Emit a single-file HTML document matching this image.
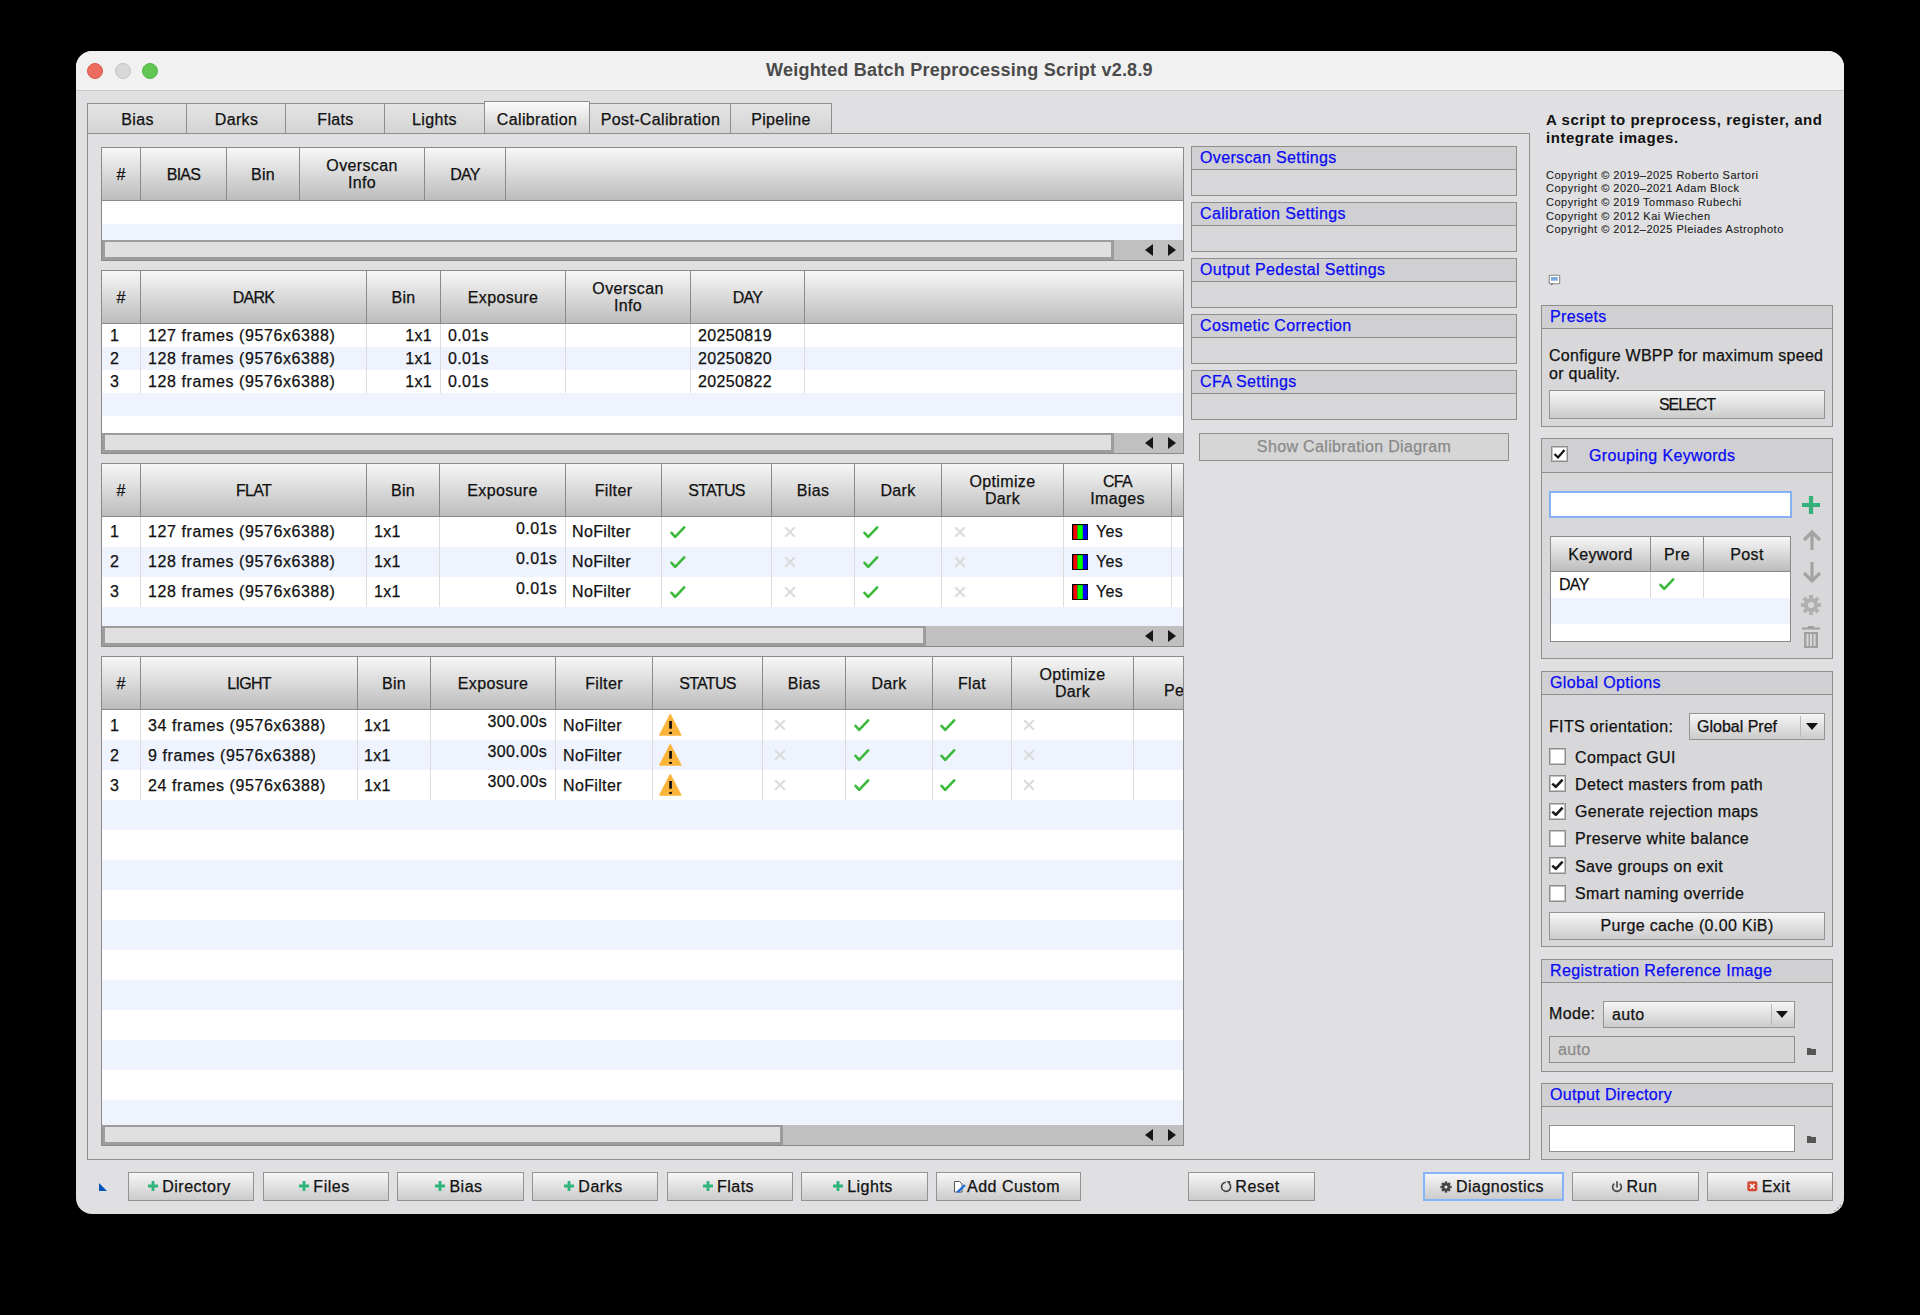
<!DOCTYPE html><html><head><meta charset="utf-8"><style>
*{box-sizing:border-box;margin:0;padding:0}
html,body{width:1920px;height:1315px;overflow:hidden;background:#000}
body{position:relative;font-family:"Liberation Sans",sans-serif;font-size:16px;color:#111;letter-spacing:0.35px;-webkit-text-stroke:0.25px currentColor}
.a{position:absolute}
.win{left:76px;top:51px;width:1768px;height:1163px;border-radius:16px;background:#e0e0e2;overflow:hidden}
.tbar{left:76px;top:51px;width:1768px;height:39px;background:#f1f1f1;border-radius:16px 16px 0 0}
.tline{left:76px;top:90px;width:1768px;height:1px;background:#c9c9cb}
.dot{width:16px;height:16px;border-radius:50%}
.title{font-weight:bold;font-size:18px;color:#4a4a4a;letter-spacing:0.24px;white-space:nowrap;-webkit-text-stroke:0}
.tab{border:1px solid #8e8e8e;background:linear-gradient(#e4e4e4,#d4d4d4);text-align:center;white-space:nowrap;line-height:28px;height:31px}
.tabsel{background:linear-gradient(#fbfbfb,#d0d0d0)}
.pane{border:1px solid #8e8e8e}
.tbl{border:1px solid #8a8a8a;background:#fff;overflow:hidden}
.hdr{left:0;top:0;height:52px;background:linear-gradient(#f7f7f7,#bcbcbc);border-bottom:1px solid #8a8a8a}
.hc{top:0;height:52px;display:flex;align-items:center;justify-content:center;text-align:center;line-height:17px;white-space:nowrap}
.hs{top:0;width:1px;height:52px;background:#8a8a8a}
.row{left:0;background:#fff}
.alt{background:#eef3fd}
.cs{width:1px;background:#dcdcdc}
.cell{white-space:nowrap;line-height:20px}
.sb{left:0;height:20px;background:#c0c0c0}
.sbh{left:0;top:0;height:20px;background:#e0e0e0;border:2px solid #9c9c9c;border-width:2px 3px 3px 3px}
.arrL{width:0;height:0;border-top:6.5px solid transparent;border-bottom:6.5px solid transparent;border-right:8px solid #161616}
.arrR{width:0;height:0;border-top:6.5px solid transparent;border-bottom:6.5px solid transparent;border-left:8px solid #161616}
.sec{border:1px solid #8e8e8e;background:#d8d8da}
.sech{left:0;top:0;right:0;height:23px;background:#d0d0d2;border-bottom:1px solid #8e8e8e;color:#0a0af5;padding-left:8px;line-height:22px;white-space:nowrap}
.btn{border:1px solid #939393;background:linear-gradient(#f6f6f6,#cbcbcb);text-align:center;white-space:nowrap;line-height:26px}
.btnd{border:1px solid #8f8f8f;background:#d6d6d6;color:#8a8a8a;text-align:center;white-space:nowrap;line-height:26px}
.lbl{white-space:nowrap;line-height:18px}
.cb{width:17px;height:17px;border:1px solid #8e8e8e;background:#fff;box-shadow:inset 0 0 0 1px #c4c4c4}
.tf{border:1px solid #8e8e8e;background:#fff}
.blue{color:#0a0af5}
.uc{letter-spacing:-0.7px}
</style></head><body>
<div class="a win"></div>
<div class="a tbar"></div><div class="a tline"></div>
<div class="a dot" style="left:87px;top:62.5px;background:#ed6b5f;border:0.5px solid #d9574b"></div>
<div class="a dot" style="left:114.5px;top:62.5px;background:#d8d8d8;border:1px solid #c4c4c4"></div>
<div class="a dot" style="left:141.5px;top:62.5px;background:#62c655;border:0.5px solid #52b345"></div>
<div class="a title" style="left:766px;top:59px;line-height:22px">Weighted Batch Preprocessing Script v2.8.9</div>
<div class="a pane" style="left:87px;top:133px;width:1443px;height:1027px"></div>
<div class="a tab" style="left:87px;top:103px;width:101px;height:31px;line-height:31px">Bias</div>
<div class="a tab" style="left:186px;top:103px;width:101px;height:31px;line-height:31px">Darks</div>
<div class="a tab" style="left:285px;top:103px;width:101px;height:31px;line-height:31px">Flats</div>
<div class="a tab" style="left:384px;top:103px;width:101px;height:31px;line-height:31px">Lights</div>
<div class="a tab tabsel" style="left:484px;top:101px;width:106px;height:33px;line-height:35px">Calibration</div>
<div class="a tab" style="left:589px;top:103px;width:143px;height:31px;line-height:31px">Post-Calibration</div>
<div class="a tab" style="left:730px;top:103px;width:102px;height:31px;line-height:31px">Pipeline</div>
<div class="a tbl" style="left:101px;top:147px;width:1083px;height:114px">
<div class="a row" style="top:53px;width:1081px;height:23px"></div>
<div class="a row alt" style="top:76px;width:1081px;height:16px"></div>
<div class="a cs" style="left:38px;top:53px;height:0px"></div>
<div class="a cs" style="left:124px;top:53px;height:0px"></div>
<div class="a cs" style="left:197px;top:53px;height:0px"></div>
<div class="a cs" style="left:322px;top:53px;height:0px"></div>
<div class="a cs" style="left:403px;top:53px;height:0px"></div>
<div class="a hdr" style="width:1081px;height:53px"></div>
<div class="a hc" style="left:0px;width:38px"><div>#</div></div>
<div class="a hc" style="left:39px;width:85px"><div><span class=uc>BIAS</span></div></div>
<div class="a hc" style="left:125px;width:72px"><div>Bin</div></div>
<div class="a hc" style="left:198px;width:124px"><div>Overscan<br>Info</div></div>
<div class="a hc" style="left:323px;width:80px"><div><span class=uc>DAY</span></div></div>
<div class="a hs" style="left:38px"></div>
<div class="a hs" style="left:124px"></div>
<div class="a hs" style="left:197px"></div>
<div class="a hs" style="left:322px"></div>
<div class="a hs" style="left:403px"></div>
<div class="a sb" style="top:92px;width:1081px"></div>
<div class="a sbh" style="top:92px;width:1012px"></div>
<div class="a arrL" style="left:1043px;top:96px"></div>
<div class="a arrR" style="left:1066px;top:96px"></div>
</div>
<div class="a tbl" style="left:101px;top:270px;width:1083px;height:184px">
<div class="a row" style="top:53px;width:1081px;height:23px"></div>
<div class="a row alt" style="top:76px;width:1081px;height:23px"></div>
<div class="a row" style="top:99px;width:1081px;height:23px"></div>
<div class="a row alt" style="top:122px;width:1081px;height:23px"></div>
<div class="a row" style="top:145px;width:1081px;height:17px"></div>
<div class="a cs" style="left:38px;top:53px;height:69px"></div>
<div class="a cs" style="left:264px;top:53px;height:69px"></div>
<div class="a cs" style="left:338px;top:53px;height:69px"></div>
<div class="a cs" style="left:463px;top:53px;height:69px"></div>
<div class="a cs" style="left:588px;top:53px;height:69px"></div>
<div class="a cs" style="left:702px;top:53px;height:69px"></div>
<div class="a hdr" style="width:1081px;height:53px"></div>
<div class="a hc" style="left:0px;width:38px"><div>#</div></div>
<div class="a hc" style="left:39px;width:225px"><div><span class=uc>DARK</span></div></div>
<div class="a hc" style="left:265px;width:73px"><div>Bin</div></div>
<div class="a hc" style="left:339px;width:124px"><div>Exposure</div></div>
<div class="a hc" style="left:464px;width:124px"><div>Overscan<br>Info</div></div>
<div class="a hc" style="left:589px;width:113px"><div><span class=uc>DAY</span></div></div>
<div class="a hs" style="left:38px"></div>
<div class="a hs" style="left:264px"></div>
<div class="a hs" style="left:338px"></div>
<div class="a hs" style="left:463px"></div>
<div class="a hs" style="left:588px"></div>
<div class="a hs" style="left:702px"></div>
<div class="a cell" style="left:8px;top:53px;height:23px;line-height:23px;">1</div>
<div class="a cell" style="left:46px;top:53px;height:23px;line-height:23px;letter-spacing:0.6px">127 frames (9576x6388)</div>
<div class="a cell" style="left:278px;top:53px;height:23px;line-height:23px;width:52px;text-align:right">1x1</div>
<div class="a cell" style="left:346px;top:53px;height:23px;line-height:23px;">0.01s</div>
<div class="a cell" style="left:596px;top:53px;height:23px;line-height:23px;">20250819</div>
<div class="a cell" style="left:8px;top:76px;height:23px;line-height:23px;">2</div>
<div class="a cell" style="left:46px;top:76px;height:23px;line-height:23px;letter-spacing:0.6px">128 frames (9576x6388)</div>
<div class="a cell" style="left:278px;top:76px;height:23px;line-height:23px;width:52px;text-align:right">1x1</div>
<div class="a cell" style="left:346px;top:76px;height:23px;line-height:23px;">0.01s</div>
<div class="a cell" style="left:596px;top:76px;height:23px;line-height:23px;">20250820</div>
<div class="a cell" style="left:8px;top:99px;height:23px;line-height:23px;">3</div>
<div class="a cell" style="left:46px;top:99px;height:23px;line-height:23px;letter-spacing:0.6px">128 frames (9576x6388)</div>
<div class="a cell" style="left:278px;top:99px;height:23px;line-height:23px;width:52px;text-align:right">1x1</div>
<div class="a cell" style="left:346px;top:99px;height:23px;line-height:23px;">0.01s</div>
<div class="a cell" style="left:596px;top:99px;height:23px;line-height:23px;">20250822</div>
<div class="a sb" style="top:162px;width:1081px"></div>
<div class="a sbh" style="top:162px;width:1012px"></div>
<div class="a arrL" style="left:1043px;top:166px"></div>
<div class="a arrR" style="left:1066px;top:166px"></div>
</div>
<div class="a tbl" style="left:101px;top:463px;width:1083px;height:184px">
<div class="a row" style="top:53px;width:1081px;height:30px"></div>
<div class="a row alt" style="top:83px;width:1081px;height:30px"></div>
<div class="a row" style="top:113px;width:1081px;height:30px"></div>
<div class="a row alt" style="top:143px;width:1081px;height:19px"></div>
<div class="a cs" style="left:38px;top:53px;height:90px"></div>
<div class="a cs" style="left:264px;top:53px;height:90px"></div>
<div class="a cs" style="left:337px;top:53px;height:90px"></div>
<div class="a cs" style="left:463px;top:53px;height:90px"></div>
<div class="a cs" style="left:559px;top:53px;height:90px"></div>
<div class="a cs" style="left:669px;top:53px;height:90px"></div>
<div class="a cs" style="left:752px;top:53px;height:90px"></div>
<div class="a cs" style="left:839px;top:53px;height:90px"></div>
<div class="a cs" style="left:961px;top:53px;height:90px"></div>
<div class="a cs" style="left:1069px;top:53px;height:90px"></div>
<div class="a hdr" style="width:1081px;height:53px"></div>
<div class="a hc" style="left:0px;width:38px"><div>#</div></div>
<div class="a hc" style="left:39px;width:225px"><div><span class=uc>FLAT</span></div></div>
<div class="a hc" style="left:265px;width:72px"><div>Bin</div></div>
<div class="a hc" style="left:338px;width:125px"><div>Exposure</div></div>
<div class="a hc" style="left:464px;width:95px"><div>Filter</div></div>
<div class="a hc" style="left:560px;width:109px"><div><span class=uc>STATUS</span></div></div>
<div class="a hc" style="left:670px;width:82px"><div>Bias</div></div>
<div class="a hc" style="left:753px;width:86px"><div>Dark</div></div>
<div class="a hc" style="left:840px;width:121px"><div>Optimize<br>Dark</div></div>
<div class="a hc" style="left:962px;width:107px"><div><span class=uc>CFA</span><br>Images</div></div>
<div class="a hc" style="left:1070px;width:12px"><div></div></div>
<div class="a hs" style="left:38px"></div>
<div class="a hs" style="left:264px"></div>
<div class="a hs" style="left:337px"></div>
<div class="a hs" style="left:463px"></div>
<div class="a hs" style="left:559px"></div>
<div class="a hs" style="left:669px"></div>
<div class="a hs" style="left:752px"></div>
<div class="a hs" style="left:839px"></div>
<div class="a hs" style="left:961px"></div>
<div class="a hs" style="left:1069px"></div>
<div class="a cell" style="left:8px;top:53px;height:30px;line-height:30px;">1</div>
<div class="a cell" style="left:46px;top:53px;height:30px;line-height:30px;letter-spacing:0.6px">127 frames (9576x6388)</div>
<div class="a cell" style="left:272px;top:53px;height:30px;line-height:30px;">1x1</div>
<div class="a cell" style="left:378px;top:53px;height:30px;line-height:30px;width:77px;text-align:right;margin-top:-3px">0.01s</div>
<div class="a cell" style="left:470px;top:53px;height:30px;line-height:30px;">NoFilter</div>
<div class="a" style="left:567px;top:61px;line-height:0"><svg width="18" height="14" viewBox="0 0 18 14"><path d="M2.5 7.8 L6.2 11.9 L15.2 2.4" fill="none" stroke="#3bb93b" stroke-width="2.6" stroke-linecap="round" stroke-linejoin="round"/></svg></div>
<div class="a" style="left:682px;top:61.5px;line-height:0"><svg width="12" height="12" viewBox="0 0 12 12"><path d="M1.2 1.2 L10.8 10.8 M10.8 1.2 L1.2 10.8" fill="none" stroke="#dcdcdc" stroke-width="2.2"/></svg></div>
<div class="a" style="left:760px;top:61px;line-height:0"><svg width="18" height="14" viewBox="0 0 18 14"><path d="M2.5 7.8 L6.2 11.9 L15.2 2.4" fill="none" stroke="#3bb93b" stroke-width="2.6" stroke-linecap="round" stroke-linejoin="round"/></svg></div>
<div class="a" style="left:851.5px;top:61.5px;line-height:0"><svg width="12" height="12" viewBox="0 0 12 12"><path d="M1.2 1.2 L10.8 10.8 M10.8 1.2 L1.2 10.8" fill="none" stroke="#dcdcdc" stroke-width="2.2"/></svg></div>
<div class="a" style="left:969.5px;top:59.6px;line-height:0"><svg width="16" height="16" viewBox="0 0 16 16"><rect x="0" y="0" width="16" height="16" fill="#000"/><rect x="1.3" y="1.1" width="4.1" height="14" fill="#ff0000"/><rect x="5.4" y="1.1" width="5.5" height="14" fill="#00ff00"/><rect x="10.9" y="1.1" width="4.5" height="14" fill="#0000ff"/></svg></div>
<div class="a cell" style="left:994px;top:53px;height:30px;line-height:30px;">Yes</div>
<div class="a cell" style="left:8px;top:83px;height:30px;line-height:30px;">2</div>
<div class="a cell" style="left:46px;top:83px;height:30px;line-height:30px;letter-spacing:0.6px">128 frames (9576x6388)</div>
<div class="a cell" style="left:272px;top:83px;height:30px;line-height:30px;">1x1</div>
<div class="a cell" style="left:378px;top:83px;height:30px;line-height:30px;width:77px;text-align:right;margin-top:-3px">0.01s</div>
<div class="a cell" style="left:470px;top:83px;height:30px;line-height:30px;">NoFilter</div>
<div class="a" style="left:567px;top:91px;line-height:0"><svg width="18" height="14" viewBox="0 0 18 14"><path d="M2.5 7.8 L6.2 11.9 L15.2 2.4" fill="none" stroke="#3bb93b" stroke-width="2.6" stroke-linecap="round" stroke-linejoin="round"/></svg></div>
<div class="a" style="left:682px;top:91.5px;line-height:0"><svg width="12" height="12" viewBox="0 0 12 12"><path d="M1.2 1.2 L10.8 10.8 M10.8 1.2 L1.2 10.8" fill="none" stroke="#dcdcdc" stroke-width="2.2"/></svg></div>
<div class="a" style="left:760px;top:91px;line-height:0"><svg width="18" height="14" viewBox="0 0 18 14"><path d="M2.5 7.8 L6.2 11.9 L15.2 2.4" fill="none" stroke="#3bb93b" stroke-width="2.6" stroke-linecap="round" stroke-linejoin="round"/></svg></div>
<div class="a" style="left:851.5px;top:91.5px;line-height:0"><svg width="12" height="12" viewBox="0 0 12 12"><path d="M1.2 1.2 L10.8 10.8 M10.8 1.2 L1.2 10.8" fill="none" stroke="#dcdcdc" stroke-width="2.2"/></svg></div>
<div class="a" style="left:969.5px;top:89.6px;line-height:0"><svg width="16" height="16" viewBox="0 0 16 16"><rect x="0" y="0" width="16" height="16" fill="#000"/><rect x="1.3" y="1.1" width="4.1" height="14" fill="#ff0000"/><rect x="5.4" y="1.1" width="5.5" height="14" fill="#00ff00"/><rect x="10.9" y="1.1" width="4.5" height="14" fill="#0000ff"/></svg></div>
<div class="a cell" style="left:994px;top:83px;height:30px;line-height:30px;">Yes</div>
<div class="a cell" style="left:8px;top:113px;height:30px;line-height:30px;">3</div>
<div class="a cell" style="left:46px;top:113px;height:30px;line-height:30px;letter-spacing:0.6px">128 frames (9576x6388)</div>
<div class="a cell" style="left:272px;top:113px;height:30px;line-height:30px;">1x1</div>
<div class="a cell" style="left:378px;top:113px;height:30px;line-height:30px;width:77px;text-align:right;margin-top:-3px">0.01s</div>
<div class="a cell" style="left:470px;top:113px;height:30px;line-height:30px;">NoFilter</div>
<div class="a" style="left:567px;top:121px;line-height:0"><svg width="18" height="14" viewBox="0 0 18 14"><path d="M2.5 7.8 L6.2 11.9 L15.2 2.4" fill="none" stroke="#3bb93b" stroke-width="2.6" stroke-linecap="round" stroke-linejoin="round"/></svg></div>
<div class="a" style="left:682px;top:121.5px;line-height:0"><svg width="12" height="12" viewBox="0 0 12 12"><path d="M1.2 1.2 L10.8 10.8 M10.8 1.2 L1.2 10.8" fill="none" stroke="#dcdcdc" stroke-width="2.2"/></svg></div>
<div class="a" style="left:760px;top:121px;line-height:0"><svg width="18" height="14" viewBox="0 0 18 14"><path d="M2.5 7.8 L6.2 11.9 L15.2 2.4" fill="none" stroke="#3bb93b" stroke-width="2.6" stroke-linecap="round" stroke-linejoin="round"/></svg></div>
<div class="a" style="left:851.5px;top:121.5px;line-height:0"><svg width="12" height="12" viewBox="0 0 12 12"><path d="M1.2 1.2 L10.8 10.8 M10.8 1.2 L1.2 10.8" fill="none" stroke="#dcdcdc" stroke-width="2.2"/></svg></div>
<div class="a" style="left:969.5px;top:119.6px;line-height:0"><svg width="16" height="16" viewBox="0 0 16 16"><rect x="0" y="0" width="16" height="16" fill="#000"/><rect x="1.3" y="1.1" width="4.1" height="14" fill="#ff0000"/><rect x="5.4" y="1.1" width="5.5" height="14" fill="#00ff00"/><rect x="10.9" y="1.1" width="4.5" height="14" fill="#0000ff"/></svg></div>
<div class="a cell" style="left:994px;top:113px;height:30px;line-height:30px;">Yes</div>
<div class="a sb" style="top:162px;width:1081px"></div>
<div class="a sbh" style="top:162px;width:824px"></div>
<div class="a arrL" style="left:1043px;top:166px"></div>
<div class="a arrR" style="left:1066px;top:166px"></div>
</div>
<div class="a tbl" style="left:101px;top:656px;width:1083px;height:490px">
<div class="a row" style="top:53px;width:1081px;height:30px"></div>
<div class="a row alt" style="top:83px;width:1081px;height:30px"></div>
<div class="a row" style="top:113px;width:1081px;height:30px"></div>
<div class="a row alt" style="top:143px;width:1081px;height:30px"></div>
<div class="a row" style="top:173px;width:1081px;height:30px"></div>
<div class="a row alt" style="top:203px;width:1081px;height:30px"></div>
<div class="a row" style="top:233px;width:1081px;height:30px"></div>
<div class="a row alt" style="top:263px;width:1081px;height:30px"></div>
<div class="a row" style="top:293px;width:1081px;height:30px"></div>
<div class="a row alt" style="top:323px;width:1081px;height:30px"></div>
<div class="a row" style="top:353px;width:1081px;height:30px"></div>
<div class="a row alt" style="top:383px;width:1081px;height:30px"></div>
<div class="a row" style="top:413px;width:1081px;height:30px"></div>
<div class="a row alt" style="top:443px;width:1081px;height:25px"></div>
<div class="a cs" style="left:38px;top:53px;height:90px"></div>
<div class="a cs" style="left:255px;top:53px;height:90px"></div>
<div class="a cs" style="left:328px;top:53px;height:90px"></div>
<div class="a cs" style="left:453px;top:53px;height:90px"></div>
<div class="a cs" style="left:550px;top:53px;height:90px"></div>
<div class="a cs" style="left:660px;top:53px;height:90px"></div>
<div class="a cs" style="left:743px;top:53px;height:90px"></div>
<div class="a cs" style="left:830px;top:53px;height:90px"></div>
<div class="a cs" style="left:909px;top:53px;height:90px"></div>
<div class="a cs" style="left:1031px;top:53px;height:90px"></div>
<div class="a hdr" style="width:1081px;height:53px"></div>
<div class="a hc" style="left:0px;width:38px"><div>#</div></div>
<div class="a hc" style="left:39px;width:216px"><div><span class=uc>LIGHT</span></div></div>
<div class="a hc" style="left:256px;width:72px"><div>Bin</div></div>
<div class="a hc" style="left:329px;width:124px"><div>Exposure</div></div>
<div class="a hc" style="left:454px;width:96px"><div>Filter</div></div>
<div class="a hc" style="left:551px;width:109px"><div><span class=uc>STATUS</span></div></div>
<div class="a hc" style="left:661px;width:82px"><div>Bias</div></div>
<div class="a hc" style="left:744px;width:86px"><div>Dark</div></div>
<div class="a hc" style="left:831px;width:78px"><div>Flat</div></div>
<div class="a hc" style="left:910px;width:121px"><div>Optimize<br>Dark</div></div>
<div class="a hc" style="left:1032px;width:50px"><div><span style='position:absolute;left:30px;top:25px'>Pedestal</span></div></div>
<div class="a hs" style="left:38px"></div>
<div class="a hs" style="left:255px"></div>
<div class="a hs" style="left:328px"></div>
<div class="a hs" style="left:453px"></div>
<div class="a hs" style="left:550px"></div>
<div class="a hs" style="left:660px"></div>
<div class="a hs" style="left:743px"></div>
<div class="a hs" style="left:830px"></div>
<div class="a hs" style="left:909px"></div>
<div class="a hs" style="left:1031px"></div>
<div class="a cell" style="left:8px;top:54px;height:30px;line-height:30px;">1</div>
<div class="a cell" style="left:46px;top:54px;height:30px;line-height:30px;letter-spacing:0.6px">34 frames (9576x6388)</div>
<div class="a cell" style="left:262px;top:54px;height:30px;line-height:30px;">1x1</div>
<div class="a cell" style="left:358px;top:54px;height:30px;line-height:30px;width:87px;text-align:right;margin-top:-4px">300.00s</div>
<div class="a cell" style="left:461px;top:54px;height:30px;line-height:30px;">NoFilter</div>
<div class="a" style="left:556px;top:56px;line-height:0"><svg width="24" height="24" viewBox="0 0 24 24"><path d="M12.3 1.6 L22.9 22.1 L1.7 22.1 Z" fill="#fbb43a" stroke="#fbb43a" stroke-width="1.2" stroke-linejoin="round"/><rect x="11.2" y="8" width="2.7" height="7.7" fill="#111"/><rect x="11.2" y="18.9" width="2.7" height="2" fill="#111"/></svg></div>
<div class="a" style="left:672.3px;top:61.5px;line-height:0"><svg width="12" height="12" viewBox="0 0 12 12"><path d="M1.2 1.2 L10.8 10.8 M10.8 1.2 L1.2 10.8" fill="none" stroke="#dcdcdc" stroke-width="2.2"/></svg></div>
<div class="a" style="left:750.5px;top:61px;line-height:0"><svg width="18" height="14" viewBox="0 0 18 14"><path d="M2.5 7.8 L6.2 11.9 L15.2 2.4" fill="none" stroke="#3bb93b" stroke-width="2.6" stroke-linecap="round" stroke-linejoin="round"/></svg></div>
<div class="a" style="left:837px;top:61px;line-height:0"><svg width="18" height="14" viewBox="0 0 18 14"><path d="M2.5 7.8 L6.2 11.9 L15.2 2.4" fill="none" stroke="#3bb93b" stroke-width="2.6" stroke-linecap="round" stroke-linejoin="round"/></svg></div>
<div class="a" style="left:921.2px;top:61.5px;line-height:0"><svg width="12" height="12" viewBox="0 0 12 12"><path d="M1.2 1.2 L10.8 10.8 M10.8 1.2 L1.2 10.8" fill="none" stroke="#dcdcdc" stroke-width="2.2"/></svg></div>
<div class="a cell" style="left:8px;top:84px;height:30px;line-height:30px;">2</div>
<div class="a cell" style="left:46px;top:84px;height:30px;line-height:30px;letter-spacing:0.6px">9 frames (9576x6388)</div>
<div class="a cell" style="left:262px;top:84px;height:30px;line-height:30px;">1x1</div>
<div class="a cell" style="left:358px;top:84px;height:30px;line-height:30px;width:87px;text-align:right;margin-top:-4px">300.00s</div>
<div class="a cell" style="left:461px;top:84px;height:30px;line-height:30px;">NoFilter</div>
<div class="a" style="left:556px;top:86px;line-height:0"><svg width="24" height="24" viewBox="0 0 24 24"><path d="M12.3 1.6 L22.9 22.1 L1.7 22.1 Z" fill="#fbb43a" stroke="#fbb43a" stroke-width="1.2" stroke-linejoin="round"/><rect x="11.2" y="8" width="2.7" height="7.7" fill="#111"/><rect x="11.2" y="18.9" width="2.7" height="2" fill="#111"/></svg></div>
<div class="a" style="left:672.3px;top:91.5px;line-height:0"><svg width="12" height="12" viewBox="0 0 12 12"><path d="M1.2 1.2 L10.8 10.8 M10.8 1.2 L1.2 10.8" fill="none" stroke="#dcdcdc" stroke-width="2.2"/></svg></div>
<div class="a" style="left:750.5px;top:91px;line-height:0"><svg width="18" height="14" viewBox="0 0 18 14"><path d="M2.5 7.8 L6.2 11.9 L15.2 2.4" fill="none" stroke="#3bb93b" stroke-width="2.6" stroke-linecap="round" stroke-linejoin="round"/></svg></div>
<div class="a" style="left:837px;top:91px;line-height:0"><svg width="18" height="14" viewBox="0 0 18 14"><path d="M2.5 7.8 L6.2 11.9 L15.2 2.4" fill="none" stroke="#3bb93b" stroke-width="2.6" stroke-linecap="round" stroke-linejoin="round"/></svg></div>
<div class="a" style="left:921.2px;top:91.5px;line-height:0"><svg width="12" height="12" viewBox="0 0 12 12"><path d="M1.2 1.2 L10.8 10.8 M10.8 1.2 L1.2 10.8" fill="none" stroke="#dcdcdc" stroke-width="2.2"/></svg></div>
<div class="a cell" style="left:8px;top:114px;height:30px;line-height:30px;">3</div>
<div class="a cell" style="left:46px;top:114px;height:30px;line-height:30px;letter-spacing:0.6px">24 frames (9576x6388)</div>
<div class="a cell" style="left:262px;top:114px;height:30px;line-height:30px;">1x1</div>
<div class="a cell" style="left:358px;top:114px;height:30px;line-height:30px;width:87px;text-align:right;margin-top:-4px">300.00s</div>
<div class="a cell" style="left:461px;top:114px;height:30px;line-height:30px;">NoFilter</div>
<div class="a" style="left:556px;top:116px;line-height:0"><svg width="24" height="24" viewBox="0 0 24 24"><path d="M12.3 1.6 L22.9 22.1 L1.7 22.1 Z" fill="#fbb43a" stroke="#fbb43a" stroke-width="1.2" stroke-linejoin="round"/><rect x="11.2" y="8" width="2.7" height="7.7" fill="#111"/><rect x="11.2" y="18.9" width="2.7" height="2" fill="#111"/></svg></div>
<div class="a" style="left:672.3px;top:121.5px;line-height:0"><svg width="12" height="12" viewBox="0 0 12 12"><path d="M1.2 1.2 L10.8 10.8 M10.8 1.2 L1.2 10.8" fill="none" stroke="#dcdcdc" stroke-width="2.2"/></svg></div>
<div class="a" style="left:750.5px;top:121px;line-height:0"><svg width="18" height="14" viewBox="0 0 18 14"><path d="M2.5 7.8 L6.2 11.9 L15.2 2.4" fill="none" stroke="#3bb93b" stroke-width="2.6" stroke-linecap="round" stroke-linejoin="round"/></svg></div>
<div class="a" style="left:837px;top:121px;line-height:0"><svg width="18" height="14" viewBox="0 0 18 14"><path d="M2.5 7.8 L6.2 11.9 L15.2 2.4" fill="none" stroke="#3bb93b" stroke-width="2.6" stroke-linecap="round" stroke-linejoin="round"/></svg></div>
<div class="a" style="left:921.2px;top:121.5px;line-height:0"><svg width="12" height="12" viewBox="0 0 12 12"><path d="M1.2 1.2 L10.8 10.8 M10.8 1.2 L1.2 10.8" fill="none" stroke="#dcdcdc" stroke-width="2.2"/></svg></div>
<div class="a sb" style="top:468px;width:1081px"></div>
<div class="a sbh" style="top:468px;width:681px"></div>
<div class="a arrL" style="left:1043px;top:472px"></div>
<div class="a arrR" style="left:1066px;top:472px"></div>
</div>
<div class="a sec" style="left:1191px;top:146px;width:326px;height:50px"><div class="a sech">Overscan Settings</div></div>
<div class="a sec" style="left:1191px;top:202px;width:326px;height:50px"><div class="a sech">Calibration Settings</div></div>
<div class="a sec" style="left:1191px;top:258px;width:326px;height:50px"><div class="a sech">Output Pedestal Settings</div></div>
<div class="a sec" style="left:1191px;top:314px;width:326px;height:50px"><div class="a sech">Cosmetic Correction</div></div>
<div class="a sec" style="left:1191px;top:370px;width:326px;height:50px"><div class="a sech">CFA Settings</div></div>
<div class="a btnd" style="left:1199px;top:433px;width:310px;height:28px">Show Calibration Diagram</div>
<div class="a lbl" style="left:1546px;top:111px;font-weight:bold;font-size:15px;line-height:18px;letter-spacing:0.55px;-webkit-text-stroke:0">A script to preprocess, register, and<br>integrate images.</div>
<div class="a lbl" style="left:1546px;top:168.5px;font-size:11px;line-height:13.7px;letter-spacing:0.5px;-webkit-text-stroke:0.1px currentColor;color:#1a1a1a">Copyright © 2019–2025 Roberto Sartori<br>Copyright © 2020–2021 Adam Block<br>Copyright © 2019 Tommaso Rubechi<br>Copyright © 2012 Kai Wiechen<br>Copyright © 2012–2025 Pleiades Astrophoto</div>
<svg class="a" style="left:1548px;top:274px" width="13" height="13" viewBox="0 0 13 13"><rect x="1.2" y="1.2" width="10.5" height="8.5" rx="1" fill="#fff" stroke="#888" stroke-width="1.1"/><rect x="3" y="3" width="6.7" height="3.7" fill="#7aaae0"/><path d="M3.2 9.6 L3.4 11.6 L5.5 9.6" fill="#666"/></svg>
<div class="a sec" style="left:1541px;top:305px;width:292px;height:122px"><div class="a sech" style="height:23px;line-height:22px">Presets</div></div>
<div class="a lbl" style="left:1549px;top:346.5px;line-height:18px;letter-spacing:0.27px">Configure WBPP for maximum speed<br>or quality.</div>
<div class="a btn" style="left:1549px;top:390px;width:276px;height:29px;line-height:27px"><span class=uc style="letter-spacing:-1px">SELECT</span></div>
<div class="a sec" style="left:1541px;top:438px;width:292px;height:221px"><div class="a sech" style="height:34px;line-height:33px"><span style='padding-left:39px'>Grouping Keywords</span></div></div>
<div class="a cb" style="left:1551px;top:446px;width:17px;height:16px"></div>
<svg class="a" style="left:1552px;top:447px" width="15" height="14" viewBox="0 0 15 14"><path d="M2.5 7 L6 10.5 L12.5 3" fill="none" stroke="#111" stroke-width="2.2"/></svg>
<div class="a tf" style="left:1549px;top:491px;width:243px;height:27px;border:2px solid #86b1f5"></div>
<svg class="a" style="left:1801px;top:495px" width="20" height="20" viewBox="0 0 20 20"><path d="M10 1 V19 M1 10 H19" stroke="#35b07a" stroke-width="4.2"/></svg>
<div class="a tbl" style="left:1550px;top:536px;width:241px;height:106px">
<div class="a row" style="top:34px;width:239px;height:27px"></div>
<div class="a row alt" style="top:61px;width:239px;height:26px"></div>
<div class="a cs" style="left:99px;top:34px;height:27px"></div><div class="a cs" style="left:152px;top:34px;height:27px"></div>
<div class="a hdr" style="width:239px;height:35px"></div>
<div class="a hc" style="left:0;width:99px;height:34px">Keyword</div><div class="a hs" style="left:99px;height:34px"></div>
<div class="a hc" style="left:100px;width:52px;height:34px">Pre</div><div class="a hs" style="left:152px;height:34px"></div>
<div class="a hc" style="left:153px;width:86px;height:34px">Post</div>
<div class="a cell" style="left:8px;top:34px;line-height:27px"><span class=uc>DAY</span></div>
<div class="a" style="left:107px;top:40px"><svg width="18" height="14" viewBox="0 0 18 14"><path d="M2.5 7.8 L6.2 11.9 L15.2 2.4" fill="none" stroke="#3bb93b" stroke-width="2.6" stroke-linecap="round" stroke-linejoin="round"/></svg></div>
</div>
<svg class="a" style="left:1802px;top:529px" width="20" height="22" viewBox="0 0 20 22"><path d="M10 21 V3 M2 11 L10 3 L18 11" fill="none" stroke="#a3a3a3" stroke-width="3.2"/></svg>
<svg class="a" style="left:1802px;top:561px" width="20" height="23" viewBox="0 0 20 23"><path d="M10 1 V20 M2 12 L10 20 L18 12" fill="none" stroke="#a3a3a3" stroke-width="3.2"/></svg>
<svg class="a" style="left:1800px;top:594px" width="22" height="22" viewBox="0 0 22 22"><g fill="#b0b0b0"><circle cx="11" cy="11" r="7"/><rect x="9" y="1" width="4" height="20"/><rect x="1" y="9" width="20" height="4"/><rect x="9" y="1" width="4" height="20" transform="rotate(45 11 11)"/><rect x="9" y="1" width="4" height="20" transform="rotate(-45 11 11)"/></g><circle cx="11" cy="11" r="3" fill="#d8d8da"/></svg>
<svg class="a" style="left:1801px;top:626px" width="20" height="23" viewBox="0 0 20 23"><g fill="#a0a0a0"><rect x="1" y="1.5" width="18" height="2"/><rect x="7" y="0" width="6" height="2"/><rect x="3" y="6" width="14" height="16"/></g><g fill="#d8d8da"><rect x="5.5" y="8" width="2" height="12"/><rect x="9" y="8" width="2" height="12"/><rect x="12.5" y="8" width="2" height="12"/></g></svg>
<div class="a sec" style="left:1541px;top:671px;width:292px;height:276px"><div class="a sech" style="height:23px;line-height:22px">Global Options</div></div>
<div class="a lbl" style="left:1549px;top:718px">FITS orientation:</div>
<div class="a btn" style="left:1689px;top:713px;width:136px;height:27px;text-align:left;padding-left:7px;line-height:25px;letter-spacing:0">Global Pref</div>
<div class="a" style="left:1800px;top:716px;width:1px;height:21px;background:#b8b8b8"></div>
<div class="a arrR" style="left:1806px;top:723px;border-left:6px solid transparent;border-right:6px solid transparent;border-top:7px solid #111;border-bottom:0"></div>
<div class="a cb" style="left:1549px;top:748.0px"></div>
<div class="a lbl" style="left:1575px;top:748.5px;line-height:18px">Compact GUI</div>
<div class="a cb" style="left:1549px;top:775.3px"></div>
<svg class="a" style="left:1550px;top:776.3px" width="15" height="15" viewBox="0 0 15 15"><path d="M2.3 7.6 L5.8 10.8 L12.6 3.6" fill="none" stroke="#1a1a1a" stroke-width="2.6" stroke-linejoin="round"/></svg>
<div class="a lbl" style="left:1575px;top:775.8px;line-height:18px">Detect masters from path</div>
<div class="a cb" style="left:1549px;top:802.6px"></div>
<svg class="a" style="left:1550px;top:803.6px" width="15" height="15" viewBox="0 0 15 15"><path d="M2.3 7.6 L5.8 10.8 L12.6 3.6" fill="none" stroke="#1a1a1a" stroke-width="2.6" stroke-linejoin="round"/></svg>
<div class="a lbl" style="left:1575px;top:803.1px;line-height:18px">Generate rejection maps</div>
<div class="a cb" style="left:1549px;top:829.9px"></div>
<div class="a lbl" style="left:1575px;top:830.4px;line-height:18px">Preserve white balance</div>
<div class="a cb" style="left:1549px;top:857.2px"></div>
<svg class="a" style="left:1550px;top:858.2px" width="15" height="15" viewBox="0 0 15 15"><path d="M2.3 7.6 L5.8 10.8 L12.6 3.6" fill="none" stroke="#1a1a1a" stroke-width="2.6" stroke-linejoin="round"/></svg>
<div class="a lbl" style="left:1575px;top:857.7px;line-height:18px">Save groups on exit</div>
<div class="a cb" style="left:1549px;top:884.5px"></div>
<div class="a lbl" style="left:1575px;top:885.0px;line-height:18px">Smart naming override</div>
<div class="a btn" style="left:1549px;top:912px;width:276px;height:28px">Purge cache (0.00 KiB)</div>
<div class="a sec" style="left:1541px;top:959px;width:292px;height:113px"><div class="a sech" style="height:23px;line-height:22px">Registration Reference Image</div></div>
<div class="a lbl" style="left:1549px;top:1005px">Mode:</div>
<div class="a btn" style="left:1603px;top:1001px;width:192px;height:27px;text-align:left;padding-left:8px;line-height:25px">auto</div>
<div class="a" style="left:1771px;top:1004px;width:1px;height:21px;background:#b8b8b8"></div>
<div class="a arrR" style="left:1776px;top:1011px;border-left:6px solid transparent;border-right:6px solid transparent;border-top:7px solid #111;border-bottom:0"></div>
<div class="a tf" style="left:1549px;top:1036px;width:246px;height:27px;background:#d6d6d6;color:#8a8a8a;padding-left:8px;line-height:25px">auto</div>
<svg class="a" style="left:1807px;top:1047px" width="9" height="8" viewBox="0 0 9 8"><path d="M0 1 H3.5 L4.5 2 H9 V8 H0 Z" fill="#555"/></svg>
<div class="a sec" style="left:1541px;top:1083px;width:292px;height:77px"><div class="a sech" style="height:23px;line-height:22px">Output Directory</div></div>
<div class="a tf" style="left:1549px;top:1125px;width:246px;height:27px"></div>
<svg class="a" style="left:1807px;top:1135px" width="9" height="8" viewBox="0 0 9 8"><path d="M0 1 H3.5 L4.5 2 H9 V8 H0 Z" fill="#555"/></svg>
<svg class="a" style="left:98px;top:1182px" width="10" height="10" viewBox="0 0 10 10"><path d="M1 1 L1 9 L9 9 Z" fill="#0056b8"/></svg>
<div class="a btn" style="left:128px;top:1172px;width:126px;height:29px;display:flex;align-items:center;justify-content:center;gap:4px;padding-right:3px;"><svg width="10" height="10" viewBox="0 0 10 10" style="flex:none;margin-top:-2px"><path d="M5 0 V10 M0 5 H10" stroke="#2fb57b" stroke-width="2.8"/></svg><span style="line-height:18px;margin-top:1px;letter-spacing:0.5px">Directory</span></div>
<div class="a btn" style="left:263px;top:1172px;width:126px;height:29px;display:flex;align-items:center;justify-content:center;gap:4px;padding-right:3px;"><svg width="10" height="10" viewBox="0 0 10 10" style="flex:none;margin-top:-2px"><path d="M5 0 V10 M0 5 H10" stroke="#2fb57b" stroke-width="2.8"/></svg><span style="line-height:18px;margin-top:1px;letter-spacing:0.5px">Files</span></div>
<div class="a btn" style="left:397px;top:1172px;width:127px;height:29px;display:flex;align-items:center;justify-content:center;gap:4px;padding-right:3px;"><svg width="10" height="10" viewBox="0 0 10 10" style="flex:none;margin-top:-2px"><path d="M5 0 V10 M0 5 H10" stroke="#2fb57b" stroke-width="2.8"/></svg><span style="line-height:18px;margin-top:1px;letter-spacing:0.5px">Bias</span></div>
<div class="a btn" style="left:532px;top:1172px;width:126px;height:29px;display:flex;align-items:center;justify-content:center;gap:4px;padding-right:3px;"><svg width="10" height="10" viewBox="0 0 10 10" style="flex:none;margin-top:-2px"><path d="M5 0 V10 M0 5 H10" stroke="#2fb57b" stroke-width="2.8"/></svg><span style="line-height:18px;margin-top:1px;letter-spacing:0.5px">Darks</span></div>
<div class="a btn" style="left:667px;top:1172px;width:126px;height:29px;display:flex;align-items:center;justify-content:center;gap:4px;padding-right:3px;"><svg width="10" height="10" viewBox="0 0 10 10" style="flex:none;margin-top:-2px"><path d="M5 0 V10 M0 5 H10" stroke="#2fb57b" stroke-width="2.8"/></svg><span style="line-height:18px;margin-top:1px;letter-spacing:0.5px">Flats</span></div>
<div class="a btn" style="left:801px;top:1172px;width:127px;height:29px;display:flex;align-items:center;justify-content:center;gap:4px;padding-right:3px;"><svg width="10" height="10" viewBox="0 0 10 10" style="flex:none;margin-top:-2px"><path d="M5 0 V10 M0 5 H10" stroke="#2fb57b" stroke-width="2.8"/></svg><span style="line-height:18px;margin-top:1px;letter-spacing:0.5px">Lights</span></div>
<div class="a btn" style="left:936px;top:1172px;width:145px;height:29px;display:flex;align-items:center;justify-content:center;gap:1px;padding-right:3px;"><svg width="12" height="12" viewBox="0 0 12 12" style="flex:none"><path d="M0.5 0.5 H5.5 L8 3 V11 H0.5 Z" fill="#fff" stroke="#555" stroke-width="1"/><path d="M3.5 11.2 L11 4" stroke="#1f6fd8" stroke-width="2.4"/></svg><span style="line-height:18px;margin-top:1px;letter-spacing:0.5px">Add Custom</span></div>
<div class="a btn" style="left:1188px;top:1172px;width:127px;height:29px;display:flex;align-items:center;justify-content:center;gap:3px;padding-right:3px;"><svg width="12" height="12" viewBox="0 0 12 12" style="flex:none"><path d="M9.4 2.6 A4.6 4.6 0 1 1 5.8 1.2" fill="none" stroke="#444" stroke-width="1.6"/><path d="M6.5 0 L10.5 0.3 L9.6 4 Z" fill="#444"/></svg><span style="line-height:18px;margin-top:1px;letter-spacing:0.5px">Reset</span></div>
<div class="a btn" style="left:1423px;top:1172px;width:141px;height:29px;display:flex;align-items:center;justify-content:center;gap:4px;padding-right:3px;border:2px solid #86b3fa"><svg width="12" height="12" viewBox="0 0 12 12" style="flex:none"><g transform="translate(6 6)" fill="#444"><circle r="3.9"/><rect x="-1.2" y="-5.6" width="2.4" height="3" transform="rotate(0)"/><rect x="-1.2" y="-5.6" width="2.4" height="3" transform="rotate(45)"/><rect x="-1.2" y="-5.6" width="2.4" height="3" transform="rotate(90)"/><rect x="-1.2" y="-5.6" width="2.4" height="3" transform="rotate(135)"/><rect x="-1.2" y="-5.6" width="2.4" height="3" transform="rotate(180)"/><rect x="-1.2" y="-5.6" width="2.4" height="3" transform="rotate(225)"/><rect x="-1.2" y="-5.6" width="2.4" height="3" transform="rotate(270)"/><rect x="-1.2" y="-5.6" width="2.4" height="3" transform="rotate(315)"/></g><circle cx="6" cy="6" r="1.5" fill="#f0f0f0"/></svg><span style="line-height:18px;margin-top:1px;letter-spacing:0.5px">Diagnostics</span></div>
<div class="a btn" style="left:1572px;top:1172px;width:127px;height:29px;display:flex;align-items:center;justify-content:center;gap:4px;padding-right:3px;"><svg width="12" height="12" viewBox="0 0 12 12" style="flex:none"><path d="M3.2 2.6 A4.4 4.4 0 1 0 8.8 2.6" fill="none" stroke="#444" stroke-width="1.6"/><path d="M6 0.2 V6.5" stroke="#444" stroke-width="1.6"/></svg><span style="line-height:18px;margin-top:1px;letter-spacing:0.5px">Run</span></div>
<div class="a btn" style="left:1707px;top:1172px;width:126px;height:29px;display:flex;align-items:center;justify-content:center;gap:4px;padding-right:3px;"><svg width="11" height="11" viewBox="0 0 11 11" style="flex:none"><rect x="0.3" y="0.3" width="10" height="10" rx="1.8" fill="#d24a32"/><path d="M3 3 L7.6 7.6 M7.6 3 L3 7.6" stroke="#fff" stroke-width="1.5"/></svg><span style="line-height:18px;margin-top:1px;letter-spacing:0.5px">Exit</span></div>
<svg class="a" style="left:1832px;top:1202px" width="12" height="12" viewBox="0 0 12 12"><circle cx="8.2" cy="3.2" r="0.8" fill="#8c8c8c"/><circle cx="5.7" cy="6" r="0.8" fill="#8c8c8c"/><circle cx="3" cy="8.6" r="0.8" fill="#8c8c8c"/></svg>
</body></html>
